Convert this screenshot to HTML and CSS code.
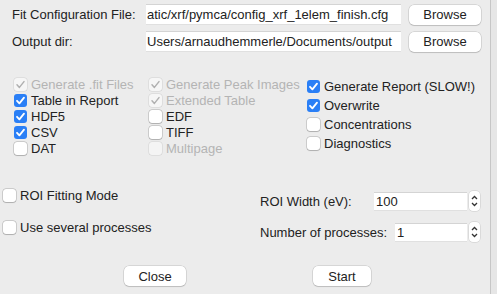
FILE: index.html
```html
<!DOCTYPE html>
<html lang="en">
<head>
    <meta charset="UTF-8">
    <title>Batch Fitting</title>
    <link rel="stylesheet" href="styles.css">
</head>
<body>
    <div class="window">
        <div class="files">
            <label class="file-label">Fit Configuration File:</label>
            <div class="path"><span>atic/xrf/pymca/config_xrf_1elem_finish.cfg</span></div>
            <button class="btn">Browse</button>

            <label class="file-label">Output dir:</label>
            <div class="path"><span>Users/arnaudhemmerle/Documents/output</span></div>
            <button class="btn">Browse</button>
        </div>

        <div class="options">
            <div class="col col-a">
                <div class="check disabled on"><span class="box"></span>Generate .fit Files</div>
                <div class="check on"><span class="box"></span>Table in Report</div>
                <div class="check on"><span class="box"></span>HDF5</div>
                <div class="check on"><span class="box"></span>CSV</div>
                <div class="check"><span class="box"></span>DAT</div>
            </div>
            <div class="col col-b">
                <div class="check disabled on"><span class="box"></span>Generate Peak Images</div>
                <div class="check disabled on"><span class="box"></span>Extended Table</div>
                <div class="check"><span class="box"></span>EDF</div>
                <div class="check"><span class="box"></span>TIFF</div>
                <div class="check disabled"><span class="box"></span>Multipage</div>
            </div>
            <div class="col col-c">
                <div class="check on"><span class="box"></span>Generate Report (SLOW!)</div>
                <div class="check on"><span class="box"></span>Overwrite</div>
                <div class="check"><span class="box"></span>Concentrations</div>
                <div class="check"><span class="box"></span>Diagnostics</div>
            </div>
        </div>

        <div class="lower">
            <div class="lower-left">
                <div class="check"><span class="box"></span>ROI Fitting Mode</div>
                <div class="check"><span class="box"></span>Use several processes</div>
            </div>
            <div class="lower-right">
                <div class="spin-row">
                    <span>ROI Width (eV):</span>
                    <div class="spin">
                        <div class="spin-field wide">100</div>
                        <div class="arrows">
                            <svg width="7" height="5" viewBox="0 0 7 5"><path d="M1 4 L3.5 1.5 L6 4" fill="none" stroke="#333" stroke-width="1.3"/></svg>
                            <svg width="7" height="5" viewBox="0 0 7 5"><path d="M1 1 L3.5 3.5 L6 1" fill="none" stroke="#333" stroke-width="1.3"/></svg>
                        </div>
                    </div>
                </div>
                <div class="spin-row">
                    <span>Number of processes:</span>
                    <div class="spin">
                        <div class="spin-field narrow">1</div>
                        <div class="arrows">
                            <svg width="7" height="5" viewBox="0 0 7 5"><path d="M1 4 L3.5 1.5 L6 4" fill="none" stroke="#333" stroke-width="1.3"/></svg>
                            <svg width="7" height="5" viewBox="0 0 7 5"><path d="M1 1 L3.5 3.5 L6 1" fill="none" stroke="#333" stroke-width="1.3"/></svg>
                        </div>
                    </div>
                </div>
            </div>
        </div>

        <div class="actions">
            <button class="btn close">Close</button>
            <button class="btn start">Start</button>
        </div>
    </div>
</body>
</html>
```

FILE: styles.css
```css
html {
    background: #e6e6e6;
}
body {
    margin: 0;
    font-family: "Liberation Sans", Arial, sans-serif;
    font-size: 13px;
    color: #222;
}
.window {
    width: 491px;
    height: 294px;
    box-sizing: border-box;
    background: #ececec;
    border-right: 1px solid #c6c6c6;
}

/* file rows */
.files {
    display: grid;
    grid-template-columns: 126px 255px 72px;
    grid-auto-rows: 21px;
    column-gap: 8px;
    row-gap: 6px;
    padding: 4px 0 0 12px;
    align-items: center;
}
.path {
    height: 21px;
    background: #fff;
    border-top: 1px solid #d4d4d4;
    border-bottom: 1px solid #e0e0e0;
    box-sizing: border-box;
    overflow: hidden;
    white-space: nowrap;
    line-height: 19px;
    padding-left: 1px;
}
.btn {
    font-family: inherit;
    font-size: 13px;
    color: #222;
    height: 20px;
    padding: 0;
    background: #fff;
    border: none;
    border-radius: 5px;
    box-shadow: 0 0 0 0.5px rgba(0,0,0,0.18), 0 1px 1px rgba(0,0,0,0.12);
}

/* checkboxes */
.options {
    display: flex;
    margin-top: 24px;
}
.col {
    display: flex;
    flex-direction: column;
}
.col-a {
    margin-left: 14px;
    width: 135px;
}
.col-b {
    width: 158px;
}
.col-c {
    margin-top: 1px;
}
.col-a .check, .col-b .check {
    height: 16px;
}
.col-c .check {
    height: 19px;
}
.check {
    display: flex;
    align-items: center;
    gap: 4px;
    white-space: nowrap;
}
.box {
    width: 13px;
    height: 13px;
    flex: none;
    background: #fff;
    border-radius: 3px;
    box-shadow: 0 0 0 0.5px rgba(0,0,0,0.25), 0 0.5px 1px rgba(0,0,0,0.15);
    box-sizing: border-box;
}
.check.on .box {
    background: #2a7ff6 url("data:image/svg+xml,%3Csvg xmlns='http://www.w3.org/2000/svg' width='13' height='13'%3E%3Cpath d='M3 6.8 L5.4 9.4 L10 3.6' fill='none' stroke='white' stroke-width='1.8' stroke-linecap='round' stroke-linejoin='round'/%3E%3C/svg%3E") center no-repeat;
    box-shadow: none;
}
.check.disabled {
    color: #b4b4b4;
}
.check.disabled .box {
    background-color: #f4f4f4;
    box-shadow: 0 0 0 0.5px rgba(0,0,0,0.12);
}
.check.disabled.on .box {
    background: #f6f6f6 url("data:image/svg+xml,%3Csvg xmlns='http://www.w3.org/2000/svg' width='13' height='13'%3E%3Cpath d='M3 6.8 L5.4 9.4 L10 3.6' fill='none' stroke='%23b0b0b0' stroke-width='1.5' stroke-linecap='round' stroke-linejoin='round'/%3E%3C/svg%3E") center no-repeat;
    box-shadow: 0 0 0 0.5px rgba(0,0,0,0.12);
}

/* lower section */
.lower {
    display: flex;
    margin-top: 31px;
}
.lower-left {
    width: 257px;
    padding-left: 3px;
    display: flex;
    flex-direction: column;
    gap: 16px;
}
.lower-left .check {
    height: 16px;
}
.lower-right {
    width: 220px;
    display: flex;
    flex-direction: column;
    gap: 11px;
    padding-top: 4px;
}
.spin-row {
    display: flex;
    align-items: center;
    height: 20px;
}
.spin {
    margin-left: auto;
    display: flex;
    align-items: center;
    gap: 2px;
}
.spin-field {
    height: 19px;
    background: #fff;
    border-top: 1px solid #d4d4d4;
    border-bottom: 1px solid #e0e0e0;
    box-sizing: border-box;
    line-height: 18px;
    padding-left: 2px;
}
.spin-field.wide {
    width: 93px;
}
.spin-field.narrow {
    width: 72px;
}
.arrows {
    width: 11px;
    height: 20px;
    background: #fff;
    border-radius: 4px;
    box-shadow: 0 0 0 0.5px rgba(0,0,0,0.15);
    display: flex;
    flex-direction: column;
    align-items: center;
    justify-content: center;
    gap: 2px;
}

/* buttons */
.actions {
    display: flex;
    margin-top: 24px;
    padding-left: 124px;
}
.btn.close {
    width: 62px;
}
.btn.start {
    width: 58px;
    margin-left: 127px;
}
```
